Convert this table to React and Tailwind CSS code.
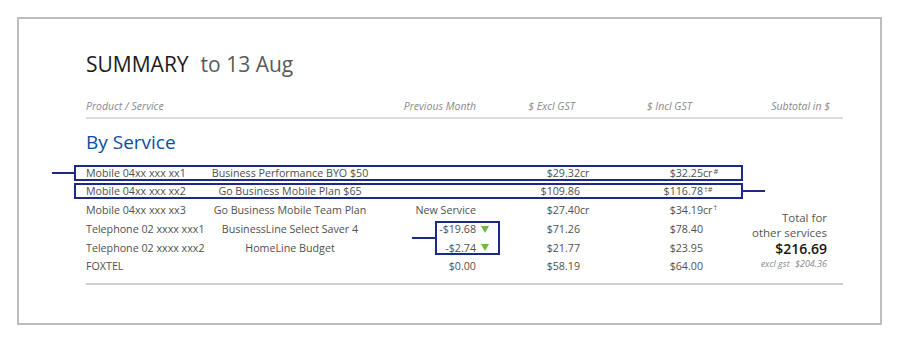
import React from "react";

const COLS = ["col-start-1","col-start-2","col-start-3","col-start-4","col-start-5","col-start-6","col-start-7","col-start-8","col-start-9"];
const ROWS = ["row-start-1","row-start-2","row-start-3","row-start-4","row-start-5","row-start-6"];

const rows = [
  { a: "Mobile 04xx xxx xx1", b: "Business Performance BYO $50", c: "", ex: "$29.32", exs: "cr", inc: "$32.25", incs: "cr", sup: "#" },
  { a: "Mobile 04xx xxx xx2", b: "Go Business Mobile Plan $65", c: "", ex: "$109.86", exs: "", inc: "$116.78", incs: "", sup: "†#" },
  { a: "Mobile 04xx xxx xx3", b: "Go Business Mobile Team Plan", c: "New Service", ex: "$27.40", exs: "cr", inc: "$34.19", incs: "cr", sup: "†" },
  { a: "Telephone 02 xxxx xxx1", b: "BusinessLine Select Saver 4", c: "-$19.68", tri: true, ex: "$71.26", exs: "", inc: "$78.40", incs: "", sup: "" },
  { a: "Telephone 02 xxxx xxx2", b: "HomeLine Budget", c: "-$2.74", tri: true, ex: "$21.77", exs: "", inc: "$23.95", incs: "", sup: "" },
  { a: "FOXTEL", b: "", c: "$0.00", ex: "$58.19", exs: "", inc: "$64.00", incs: "", sup: "" },
];

function Tri() {
  return (
    <svg width="8" height="7" viewBox="0 0 8 7" className="block">
      <polygon points="0,0 8,0 4,7" fill="#6dbb3f" />
    </svg>
  );
}

export default function App() {
  return (
    <div className="w-[900px] h-[344px] bg-white pt-[17px] pl-[17px]" style={{ fontFamily: '"Open Sans", "Noto Sans", sans-serif' }}>
      <div className="w-[865px] h-[308px] border-2 border-[#bdbdbd] pl-[67px] pt-[31px]">
        <div className="w-[757px]">
          {/* Title */}
          <div className="h-[28px] leading-[28px] text-[21px] whitespace-nowrap">
            <span className="text-[#1c1c1c]">SUMMARY</span>
            <span className="ml-[12px] text-[#5a5a5a]">to 13 Aug</span>
          </div>

          {/* Header */}
          <div className="mt-[20px] grid grid-cols-[127px_154px_109px_24px_80px_40px_83px_40px_100px] h-[21px] pb-[3px] border-b-2 border-[#dcdcdc] text-[10.5px] italic text-[#8a8a8a] leading-[16px]">
            <div className="col-start-1 whitespace-nowrap">Product / Service</div>
            <div className="col-start-3 text-right whitespace-nowrap">Previous Month</div>
            <div className="col-start-5 text-right pr-[5px] whitespace-nowrap">$ Excl GST</div>
            <div className="col-start-7 text-right pr-[11px] whitespace-nowrap">$ Incl GST</div>
            <div className="col-start-9 text-right pr-[13px] whitespace-nowrap">Subtotal in $</div>
          </div>

          {/* By Service */}
          <div className="mt-[11px] h-[24px] leading-[24px] text-[19px] text-[#0c4da2]">By Service</div>

          {/* Table body */}
          <div className="mt-[10px] grid grid-cols-[127px_154px_109px_24px_80px_40px_83px_40px_100px] grid-rows-[18px_18px_20px_18px_19px_18px] text-[10.7px] text-[#505050] leading-[16px]">
            {/* highlight boxes */}
            <div className="col-start-1 col-end-9 row-start-1 self-start mt-[1px] h-[16px] -ml-[12px] border-2 border-[#1b2a84] relative">
              <span className="absolute right-full top-1/2 -translate-y-1/2 mr-[2px] w-[22px] h-[2px] bg-[#1b2a84]" />
            </div>
            <div className="col-start-1 col-end-9 row-start-2 self-start mt-[1px] h-[16px] -ml-[12px] border-2 border-[#1b2a84] relative">
              <span className="absolute left-full top-1/2 -translate-y-1/2 ml-[2px] w-[22px] h-[2px] bg-[#1b2a84]" />
            </div>
            <div className="col-start-3 col-end-5 row-start-4 row-end-6 ml-[68px] mt-[1px] mb-[2px] border-2 border-[#1b2a84] relative">
              <span className="absolute right-full top-1/2 -translate-y-1/2 mr-[2px] w-[23px] h-[2px] bg-[#1b2a84]" />
            </div>

            {rows.map((r, i) => (
              <React.Fragment key={i}>
                <div className={`${COLS[0]} ${ROWS[i]} flex items-center whitespace-nowrap`}>{r.a}</div>
                <div className={`${COLS[1]} ${ROWS[i]} flex items-center justify-center whitespace-nowrap`}>{r.b}</div>
                <div className={`${COLS[2]} ${ROWS[i]} flex items-center justify-end whitespace-nowrap`}>{r.c}</div>
                <div className={`${COLS[3]} ${ROWS[i]} flex items-center pl-[5px]`}>{r.tri ? <Tri /> : null}</div>
                <div className={`${COLS[4]} ${ROWS[i]} flex items-center justify-end whitespace-nowrap`}>{r.ex}</div>
                <div className={`${COLS[5]} ${ROWS[i]} flex items-center whitespace-nowrap`}>{r.exs}</div>
                <div className={`${COLS[6]} ${ROWS[i]} flex items-center justify-end whitespace-nowrap`}>{r.inc}</div>
                <div className={`${COLS[7]} ${ROWS[i]} flex items-center whitespace-nowrap`}>
                  {r.incs}
                  {r.sup ? <span className="text-[7.5px] leading-[8px] self-start mt-[3px] ml-[1px]">{r.sup}</span> : null}
                </div>
              </React.Fragment>
            ))}

            {/* subtotal */}
            <div className="col-start-9 row-start-3 row-end-7 flex flex-col items-end justify-end pr-[16px] pb-[5px] whitespace-nowrap">
              <div className="text-[11.5px] leading-[14px] text-[#555555]">Total for</div>
              <div className="text-[11.5px] leading-[16px] text-[#555555]">other services</div>
              <div className="text-[14px] leading-[16px] font-semibold text-[#151515]">$216.69</div>
              <div className="mt-[1.5px] text-[9px] leading-[12px] italic text-[#8a8a8a]">
                excl gst <span className="ml-[3px]">$204.36</span>
              </div>
            </div>
          </div>

          <div className="mt-[8px] h-[2px] bg-[#cfcfcf]" />
        </div>
      </div>
    </div>
  );
}
